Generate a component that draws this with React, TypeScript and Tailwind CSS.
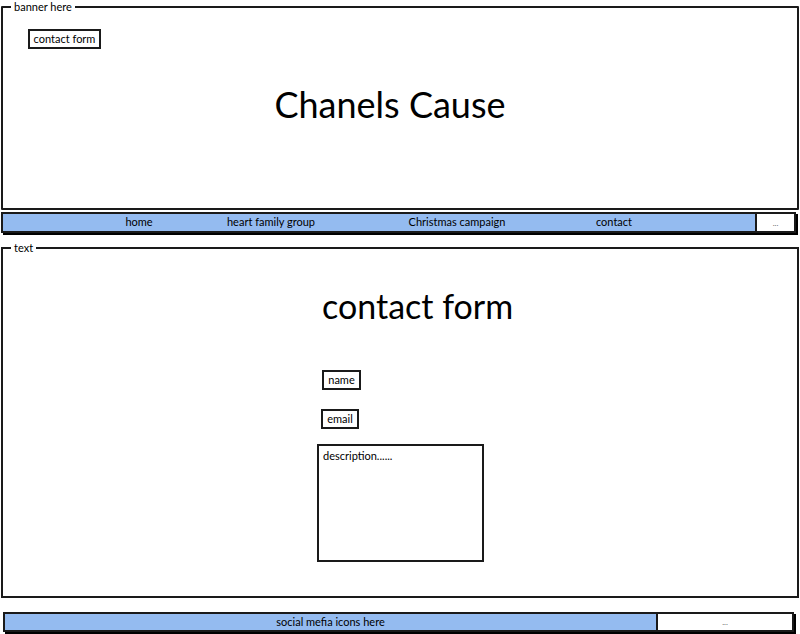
import React from "react";

const font = { fontFamily: "Lato, 'Open Sans', sans-serif" };

export default function App() {
  return (
    <div className="w-[800px] h-[634px] bg-white text-black overflow-hidden" style={font}>
      {/* Banner */}
      <fieldset className="ml-[1px] w-[798px] h-[210px] border-2 border-[#1a1a1a] rounded-[1px]">
        <legend className="ml-[8px] px-[3px] text-[11px] leading-[13px]">banner here</legend>
        <div className="ml-[25px] mt-[16px] w-[73px] h-[20px] border-2 border-[#1a1a1a] flex items-center justify-center text-[11px]">
          contact form
        </div>
        <div className="mt-[35px] pr-[20px] text-center text-[36px] leading-[40px]">Chanels Cause</div>
      </fieldset>

      {/* Nav */}
      <div className="ml-[1px] mt-[2px] w-[795px] h-[21px] flex border-2 border-[#1a1a1a] shadow-[2px_2px_0_#000] text-[11px]">
        <div className="w-[754px] h-full bg-[#94bbf0] flex items-center pl-[76px] border-r-2 border-[#1a1a1a]">
          <span className="w-[120px] text-center">home</span>
          <span className="w-[144px] text-center">heart family group</span>
          <span className="w-[228px] text-center">Christmas campaign</span>
          <span className="w-[86px] text-center">contact</span>
        </div>
        <div className="flex-1 h-full bg-white flex items-center justify-center text-[8px] text-[#666]">...</div>
      </div>

      {/* Text */}
      <fieldset className="ml-[1px] mt-[8px] w-[798px] h-[357px] border-2 border-[#1a1a1a]">
        <legend className="ml-[8px] px-[3px] text-[11px] leading-[13px]">text</legend>
        <div className="ml-[314px] flex flex-col items-start">
          <div className="ml-[5px] mt-[32px] text-[34px] leading-[40px]">contact form</div>
          <div className="ml-[5px] mt-[44px] w-[39px] h-[20px] border-2 border-[#1a1a1a] flex items-center justify-center text-[11px]">
            name
          </div>
          <div className="ml-[4px] mt-[19px] w-[38px] h-[20px] border-2 border-[#1a1a1a] flex items-center justify-center text-[11px]">
            email
          </div>
          <div className="mt-[15px] w-[167px] h-[118px] border-2 border-[#1a1a1a] px-[4px] pt-[3px] text-[11px] leading-[14px]">
            description......
          </div>
        </div>
      </fieldset>

      {/* Footer */}
      <div className="ml-[3px] mt-[14px] w-[791px] h-[20px] flex border-2 border-[#1a1a1a] shadow-[2px_2px_0_#000] text-[11px]">
        <div className="w-[653px] h-full bg-[#94bbf0] flex items-center justify-center border-r-2 border-[#1a1a1a]">
          social mefia icons here
        </div>
        <div className="flex-1 h-full bg-white flex items-center justify-center text-[8px] text-[#666]">...</div>
      </div>
    </div>
  );
}
